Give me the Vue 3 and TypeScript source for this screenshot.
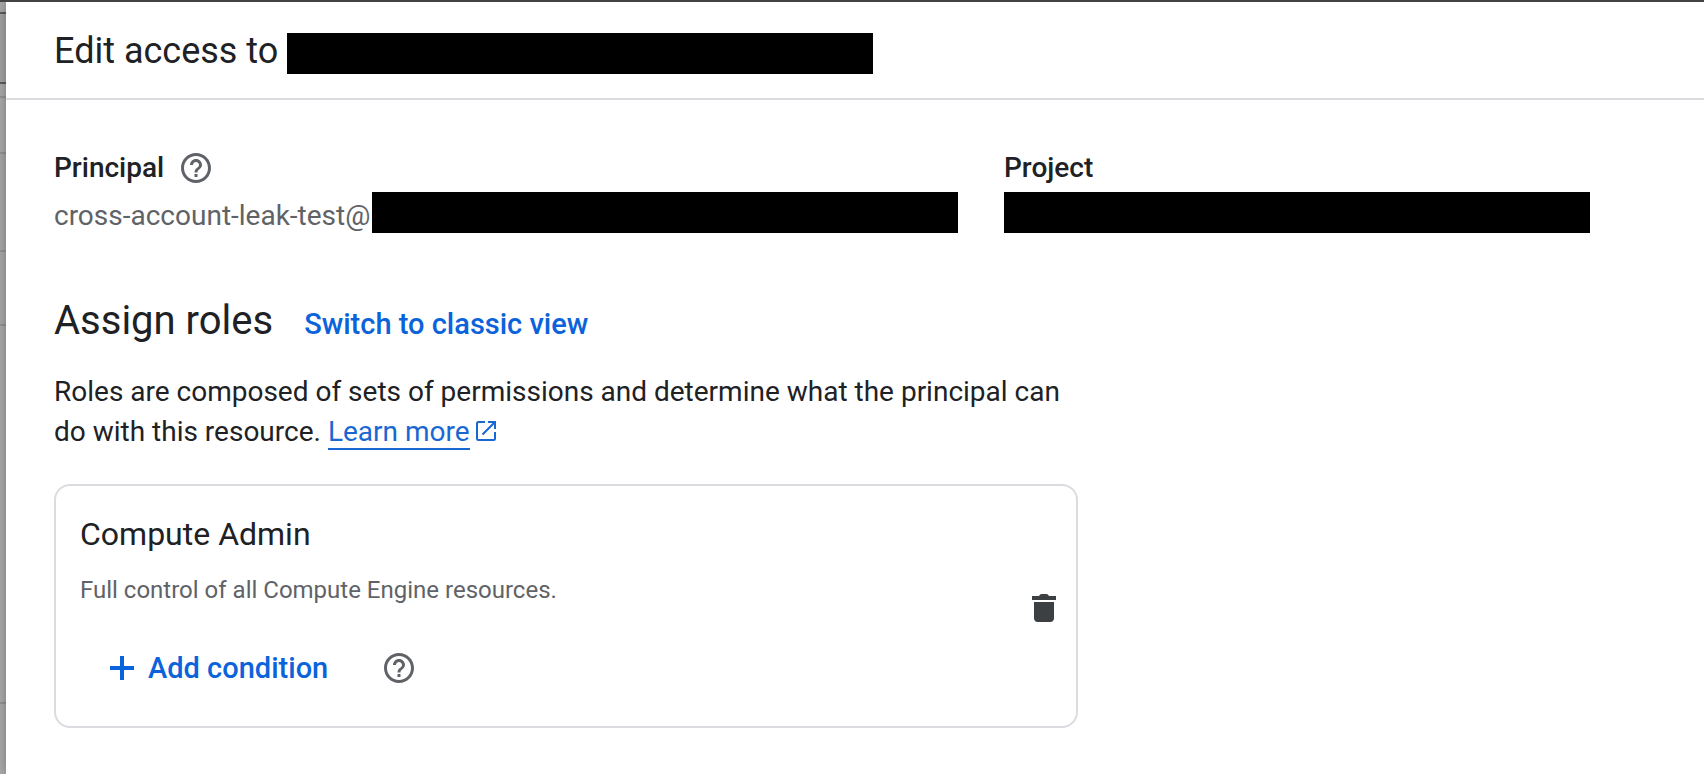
<script setup lang="ts">
interface Role {
  name: string
  description: string
}

const roles: Role[] = [
  { name: 'Compute Admin', description: 'Full control of all Compute Engine resources.' },
]
</script>

<template>
  <div class="page">
    <div class="backdrop" aria-hidden="true">
      <div class="band band-a"></div>
      <div class="band band-b"></div>
      <div class="band band-c"></div>
      <div class="band band-d"></div>
      <div class="band band-e"></div>
      <div class="band band-f"></div>
      <div class="band band-g"></div>
      <div class="band band-h"></div>
    </div>

    <main class="panel">
      <header class="panel-header">
        <h1 class="title">
          <span>Edit access to</span>
          <span class="redacted title-bar"></span>
        </h1>
      </header>

      <div class="panel-body">
        <section class="summary">
          <div class="field">
            <div class="field-head">
              <h2 class="label">Principal</h2>
              <button type="button" class="icon-button" aria-label="About principals">
                <svg class="help" viewBox="0 0 24 24" aria-hidden="true">
                  <path d="M11 18h2v-2h-2v2zm1-16C6.48 2 2 6.48 2 12s4.48 10 10 10 10-4.48 10-10S17.52 2 12 2zm0 18c-4.41 0-8-3.59-8-8s3.59-8 8-8 8 3.59 8 8-3.59 8-8 8zm0-14c-2.21 0-4 1.79-4 4h2c0-1.100.9-2 2-2s2 .9 2 2c0 2-3 1.750-3 5h2c0-2.250 3-2.500 3-5 0-2.210-1.790-4-4-4z" />
                </svg>
              </button>
            </div>
            <div class="value">
              <span class="value-text">cross-account-leak-test@</span>
              <span class="redacted"></span>
            </div>
          </div>
          <div class="field">
            <div class="field-head">
              <h2 class="label">Project</h2>
            </div>
            <div class="value">
              <span class="redacted"></span>
            </div>
          </div>
        </section>

        <section class="assign">
          <div class="assign-head">
            <h2 class="assign-title">Assign roles</h2>
            <button type="button" class="text-button">Switch to classic view</button>
          </div>
          <p class="intro">
            Roles are composed of sets of permissions and determine what the principal can do with this resource.
            <a class="learn" href="#learn-more">Learn more</a><svg class="external" viewBox="0 0 20 20" aria-hidden="true">
              <path d="M9 1H2.500Q1 1 1 2.500V17.500Q1 19 2.500 19H17.500Q19 19 19 17.500V11M12 1H19V8M18.500 1.500L6.500 13.500" />
            </svg>
          </p>

          <article v-for="role in roles" :key="role.name" class="card">
            <div class="card-main">
              <h3 class="role-name">{{ role.name }}</h3>
              <p class="role-text">{{ role.description }}</p>
              <div class="actions">
                <button type="button" class="text-button add">
                  <svg class="plus" viewBox="0 0 24 24" aria-hidden="true">
                    <path d="M10 0h4v10h10v4H14v10h-4V14H0v-4h10z" />
                  </svg>
                  <span>Add condition</span>
                </button>
                <button type="button" class="icon-button" aria-label="About conditions">
                  <svg class="help" viewBox="0 0 24 24" aria-hidden="true">
                    <path d="M11 18h2v-2h-2v2zm1-16C6.48 2 2 6.48 2 12s4.48 10 10 10 10-4.48 10-10S17.52 2 12 2zm0 18c-4.41 0-8-3.59-8-8s3.59-8 8-8 8 3.59 8 8-3.59 8-8 8zm0-14c-2.21 0-4 1.79-4 4h2c0-1.100.9-2 2-2s2 .9 2 2c0 2-3 1.750-3 5h2c0-2.250 3-2.500 3-5 0-2.210-1.790-4-4-4z" />
                  </svg>
                </button>
              </div>
            </div>
            <button type="button" class="icon-button delete" aria-label="Delete role">
              <svg class="trash" viewBox="0 0 24 28" aria-hidden="true">
                <path d="M0 2h7q1-2 2.500-2h5Q16 0 17 2h7v4H0zM2 8h20v16q0 4-4 4H6q-4 0-4-4z" />
              </svg>
            </button>
          </article>
        </section>
      </div>
    </main>
  </div>
</template>

<style>
body {
  margin: 0;
  background: #fff;
}
</style>

<style scoped>
.page {
  display: grid;
  grid-template-columns: 6px minmax(0, 1fr);
  min-height: 100vh;
  box-sizing: border-box;
  border-top: 2px solid #434343;
  font-family: Roboto, "Liberation Sans", sans-serif;
  color: #202124;
}

.backdrop {
  display: flex;
  flex-direction: column;
  background: #a9a9a9;
}

.band {
  box-sizing: border-box;
  border-bottom: 2px solid #929494;
}

.band-a { height: 12px; border-color: #5b5c5e; }
.band-b { height: 70px; border-color: #5b5c5e; background: #a0a1a4; }
.band-c { height: 14px; }
.band-d { height: 56px; }
.band-e { height: 98px; background: #a4a7a6; }
.band-f { height: 74px; background: #a6a8a8; }
.band-g { height: 378px; }
.band-h { flex: 1; border: 0; }

.panel {
  background: #fff;
  box-shadow: 0 0 10px rgba(0, 0, 0, 0.3);
  clip-path: inset(0 0 0 -6px);
}

.panel-header {
  padding: 28px 48px 24px;
  border-bottom: 2px solid #dadce0;
}

h1, h2, h3, p {
  margin: 0;
  font-weight: 400;
}

.title {
  display: flex;
  gap: 9px;
  height: 44px;
  font-size: 36px;
  line-height: 42px;
}

.redacted {
  flex: 0 1 586px;
  height: 41px;
  background: #000;
}

.title-bar {
  align-self: flex-end;
}

.panel-body {
  padding: 50px 48px 44px;
}

.summary {
  display: grid;
  grid-template-columns: 950fr 652fr;
}

.field-head {
  display: flex;
  align-items: center;
  gap: 14px;
  height: 36px;
}

.label {
  font-size: 28px;
  line-height: 36px;
  font-weight: 500;
}

.value {
  display: flex;
  gap: 2px;
  height: 48px;
  margin-top: 6px;
  font-size: 28px;
  line-height: 48px;
  color: #5f6368;
}

button {
  padding: 0;
  border: 0;
  background: none;
  font-family: inherit;
  color: inherit;
  cursor: pointer;
}

.icon-button {
  display: flex;
  align-items: center;
  justify-content: center;
}

.help {
  width: 36px;
  height: 36px;
  fill: #5f6368;
}

.assign {
  margin-top: 56px;
}

.assign-head {
  display: flex;
  align-items: baseline;
  gap: 31px;
}

.assign-title {
  font-size: 40px;
  line-height: 50px;
}

.text-button {
  font-size: 29px;
  line-height: 36px;
  font-weight: 500;
  color: #0b63dc;
}

.intro {
  max-width: 1024px;
  margin-top: 26px;
  font-size: 28px;
  line-height: 40px;
}

.learn {
  color: #1967d2;
  border-bottom: 2px solid #1967d2;
  text-decoration: none;
}

.external {
  width: 20px;
  height: 20px;
  margin-left: 6px;
  fill: none;
  stroke: #1967d2;
  stroke-width: 2;
}

.card {
  display: flex;
  align-items: center;
  justify-content: space-between;
  box-sizing: border-box;
  max-width: 1024px;
  margin-top: 32px;
  padding: 28px 12px 24px 24px;
  border: 2px solid #dadce0;
  border-radius: 16px;
}

.role-name {
  font-size: 32px;
  line-height: 40px;
}

.role-text {
  margin-top: 20px;
  font-size: 24px;
  line-height: 32px;
  color: #5f6368;
}

.actions {
  display: flex;
  align-items: center;
  gap: 53px;
  height: 48px;
  margin-top: 38px;
  margin-bottom: 10px;
  padding-left: 30px;
}

.add {
  display: flex;
  align-items: center;
  gap: 14px;
}

.plus {
  width: 24px;
  height: 24px;
  fill: #0b63dc;
}

.delete {
  width: 40px;
  height: 40px;
}

.trash {
  width: 24px;
  height: 28px;
  fill: #3c4043;
}
</style>
